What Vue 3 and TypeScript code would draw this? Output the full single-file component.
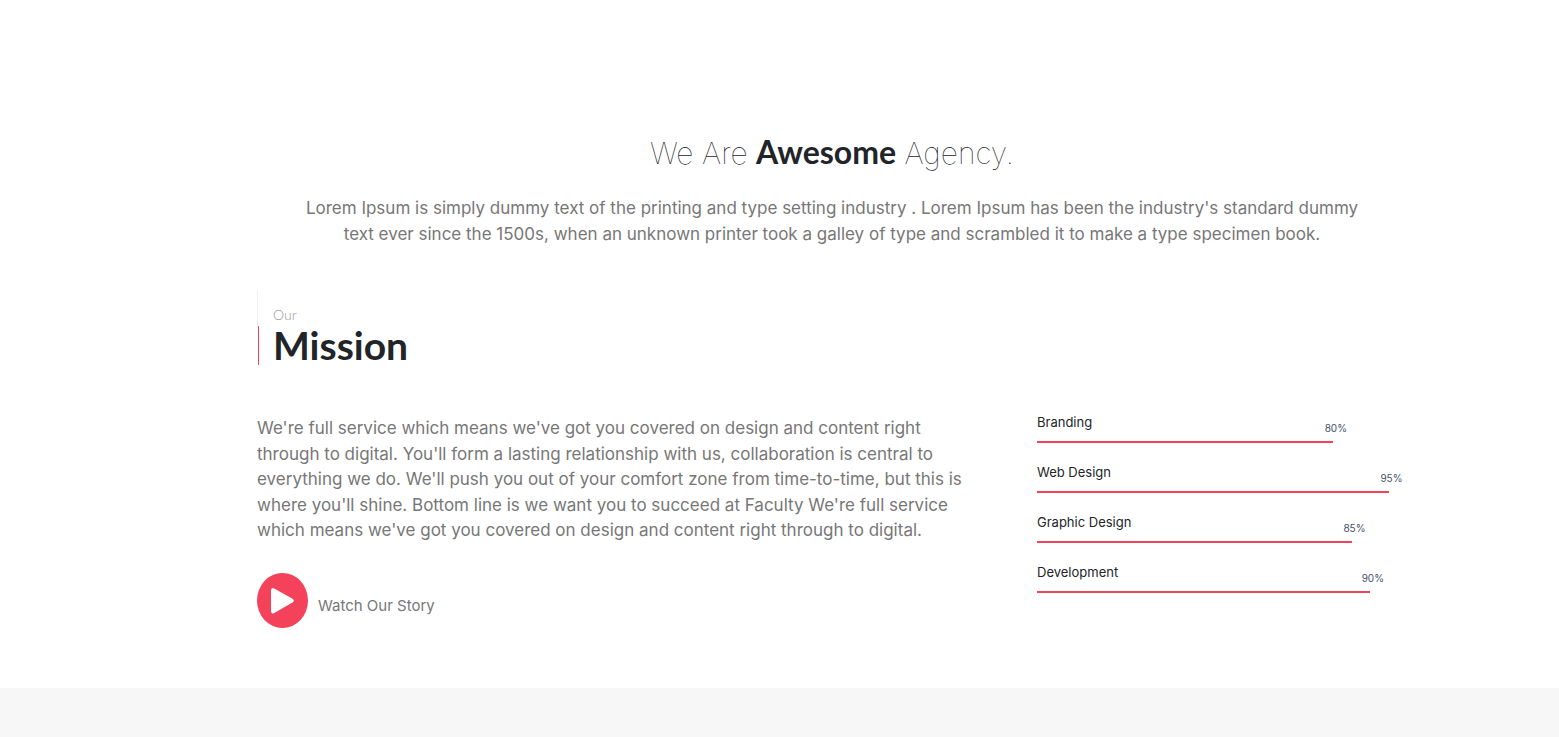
<script setup lang="ts">
interface Skill {
  name: string
  percent: number
}

const skills: Skill[] = [
  { name: 'Branding', percent: 80 },
  { name: 'Web Design', percent: 95 },
  { name: 'Graphic Design', percent: 85 },
  { name: 'Development', percent: 90 },
]
</script>

<template>
  <main class="page">
    <section class="about">
      <header class="intro">
        <h1 class="intro-title">We Are <strong>Awesome</strong> Agency.</h1>
        <p class="copy">
          Lorem Ipsum is simply dummy text of the printing and type setting industry . Lorem Ipsum
          has been the industry's standard dummy text ever since the 1500s, when an unknown printer
          took a galley of type and scrambled it to make a type specimen book.
        </p>
      </header>

      <h2 class="mission-title">
        <span class="mission-over">Our</span>
        <span class="mission-name">Mission</span>
      </h2>

      <div class="columns">
        <div class="story">
          <p class="copy">
            We're full service which means we've got you covered on design and content right through
            to digital. You'll form a lasting relationship with us, collaboration is central to
            everything we do. We'll push you out of your comfort zone from time-to-time, but this is
            where you'll shine. Bottom line is we want you to succeed at Faculty We're full service
            which means we've got you covered on design and content right through to digital.
          </p>
          <a class="watch" href="#story">
            <svg class="watch-icon" viewBox="0 0 51 55" aria-hidden="true">
              <ellipse cx="25.500" cy="27.500" rx="25.500" ry="27.500" fill="#f4425a" />
              <path
                d="M14 17.500 Q14 13.800 17.300 15.500 L35.500 25.800 Q38.200 27.700 35.500 29.500 L17.300 39.900 Q14 41.500 14 38 Z"
                fill="#fff"
              />
            </svg>
            <span class="watch-label">Watch Our Story</span>
          </a>
        </div>

        <ul class="skills">
          <li v-for="skill in skills" :key="skill.name" class="skill">
            <span class="skill-name">{{ skill.name }}</span>
            <div class="skill-bar" :style="{ width: skill.percent + '%' }">
              <span class="skill-value">{{ skill.percent }}%</span>
            </div>
          </li>
        </ul>
      </div>
    </section>
    <div class="next-section"></div>
  </main>
</template>

<style>
body {
  margin: 0;
  background: #fff;
}
</style>

<style scoped>
.page {
  display: flex;
  flex-direction: column;
  min-height: 100vh;
  color: #212529;
  font-family: Inter, 'Open Sans', sans-serif;
}

.about {
  padding: 131px 152px 60px 257px;
}

.intro {
  text-align: center;
}

.intro-title {
  margin: 0 0 22px;
  font-size: 30px;
  font-weight: 100;
  line-height: 42px;
}

.intro-title strong {
  font-family: Lato, sans-serif;
  font-size: 32px;
  font-weight: 700;
}

.copy {
  margin: 0;
  color: #777;
  font-size: 17px;
  line-height: 1.5;
}

.intro .copy {
  padding: 0 32px;
}

.mission-title {
  display: flex;
  flex-direction: column;
  margin: 42px 0 0;
  font-family: Lato, sans-serif;
}

.mission-over {
  padding: 16px 0 1px 15px;
  border-left: 1px solid #eee;
  color: #999;
  font-size: 14px;
  font-weight: 300;
  line-height: 20px;
}

.mission-name {
  margin-left: 1px;
  padding-left: 14px;
  border-left: 1px solid #f4425a;
  font-size: 39px;
  font-weight: 700;
  line-height: 39px;
}

.columns {
  display: grid;
  grid-template-columns: 2fr 1fr;
  gap: 40px;
  margin-top: 49px;
}

.story .copy {
  padding: 2px 15px 0 0;
}

.watch {
  display: flex;
  align-items: center;
  gap: 10px;
  width: fit-content;
  margin-top: 29px;
  color: #777;
  text-decoration: none;
}

.watch-icon {
  width: 51px;
  height: 55px;
}

.watch-label {
  padding-top: 12px;
  font-size: 15px;
  line-height: 20px;
}

.skills {
  margin: 0;
  padding: 0;
  list-style: none;
}

.skill {
  height: 50px;
}

.skill-name {
  display: block;
  padding-bottom: 11px;
  font-size: 13px;
  line-height: 16px;
}

.skill-bar {
  position: relative;
  height: 2px;
  background: #f4425a;
}

.skill-value {
  position: absolute;
  right: -14px;
  bottom: 8px;
  color: #44506a;
  font-size: 10px;
  line-height: 14px;
}

.next-section {
  flex: 1;
  background: #f7f7f7;
}
</style>
